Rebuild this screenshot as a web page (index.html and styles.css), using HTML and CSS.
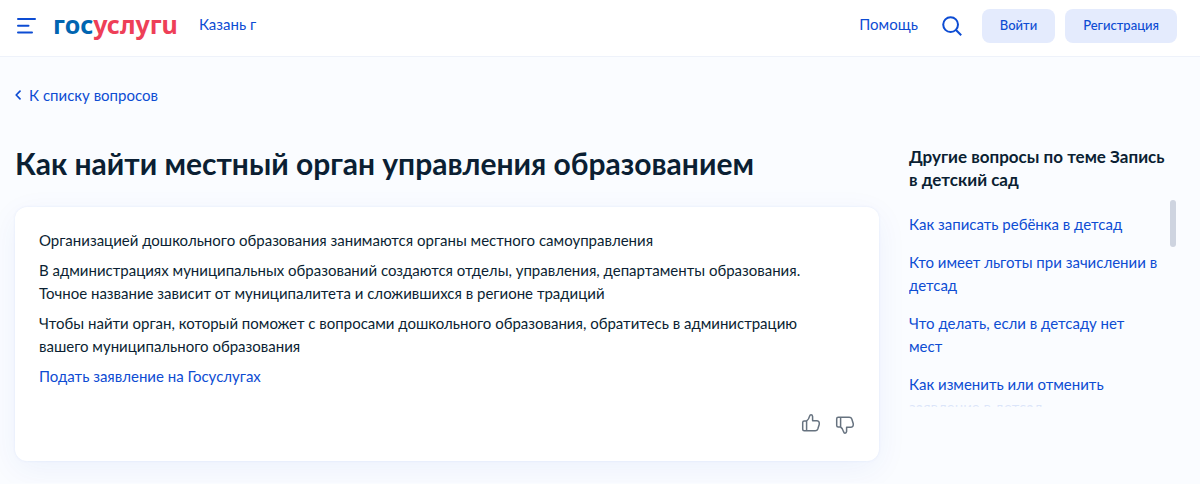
FILE: index.html
```html
<!DOCTYPE html>
<html lang="ru">
<head>
  <meta charset="UTF-8">
  <meta name="viewport" content="width=device-width, initial-scale=1">
  <title>Как найти местный орган управления образованием</title>
  <link rel="stylesheet" href="styles.css">
</head>
<body>
  <header class="header">
    <button class="icon-btn" type="button" aria-label="Меню">
      <svg width="20" height="18" viewBox="0 0 20 18" fill="none" stroke="#0d4cd3" stroke-width="2" stroke-linecap="round">
        <path d="M2 2H19M2 8.7H12.5M2 15.4H16"/>
      </svg>
    </button>
    <a class="logo" href="#" aria-label="Госуслуги"><span class="logo-blue">гос</span><span class="logo-red">услугu</span></a>
    <a class="region" href="#">Казань г</a>
    <nav class="header-right">
      <a class="help" href="#">Помощь</a>
      <button class="icon-btn search" type="button" aria-label="Поиск">
        <svg width="20" height="20" viewBox="0 0 20 20" fill="none" stroke="#0d4cd3" stroke-width="2">
          <circle cx="8.6" cy="8.6" r="7.4"/>
          <path d="M14 14L19.2 19.2"/>
        </svg>
      </button>
      <button class="btn" type="button">Войти</button>
      <button class="btn" type="button">Регистрация</button>
    </nav>
  </header>

  <main class="page">
    <a class="back" href="#">
      <svg width="6" height="10" viewBox="0 0 6 10" fill="none" stroke="#0d4cd3" stroke-width="1.7" stroke-linecap="round" stroke-linejoin="round">
        <path d="M5 1.2L1.2 5L5 8.8"/>
      </svg>
      К списку вопросов
    </a>

    <div class="columns">
      <section class="content">
        <h1 class="title">Как найти местный орган управления образованием</h1>
        <article class="card">
          <div class="card-text">
            <p>Организацией дошкольного образования занимаются органы местного самоуправления</p>
            <p>В администрациях муниципальных образований создаются отделы, управления, департаменты образования. Точное название зависит от муниципалитета и сложившихся в регионе традиций</p>
            <p>Чтобы найти орган, который поможет с вопросами дошкольного образования, обратитесь в администрацию вашего муниципального образования</p>
            <p><a href="#">Подать заявление на Госуслугах</a></p>
          </div>
          <div class="rating">
            <button class="icon-btn" type="button" aria-label="Полезно">
              <svg width="20" height="20" viewBox="0 0 20 20" fill="none" stroke="#66727f" stroke-width="1.5" stroke-linejoin="round">
                <path d="M5.6 8H3.2Q1.7 8 1.7 9.5V16.2Q1.7 17.7 3.2 17.7H14.2Q16.2 17.7 16.8 16L18.2 11.6Q18.8 8 16 7.8H11.6V3.6Q11.4 1.8 10 1.8Q9 1.8 8.6 3.2Q7.8 6.6 5.6 8V17.7"/>
              </svg>
            </button>
            <button class="icon-btn dislike" type="button" aria-label="Не полезно">
              <svg width="20" height="20" viewBox="0 0 20 20" fill="none" stroke="#66727f" stroke-width="1.5" stroke-linejoin="round">
                <path d="M5.6 12H3.2Q1.7 12 1.7 10.5V3.8Q1.7 2.3 3.2 2.3H14.2Q16.2 2.3 16.8 4L18.2 8.4Q18.8 12 16 12.2H11.6V16.4Q11.4 18.2 10 18.2Q9 18.2 8.6 16.8Q7.8 13.4 5.6 12V2.3"/>
              </svg>
            </button>
          </div>
        </article>
      </section>

      <aside class="sidebar">
        <h2 class="sidebar-title">Другие вопросы по теме Запись в детский сад</h2>
        <div class="scroll">
          <ul class="questions">
            <li><a href="#">Как записать ребёнка в детсад</a></li>
            <li><a href="#">Кто имеет льготы при зачислении в детсад</a></li>
            <li><a href="#">Что делать, если в детсаду нет мест</a></li>
            <li><a href="#">Как изменить или отменить заявление в детсад</a></li>
          </ul>
          <span class="thumb"></span>
        </div>
      </aside>
    </div>
  </main>
</body>
</html>
```

FILE: styles.css
```css
* {
  box-sizing: border-box;
}

body {
  margin: 0;
  background: #fafcff;
  color: #0b1f33;
  font-family: Lato, "Open Sans", sans-serif;
  font-size: 15px;
  line-height: 23px;
}

a {
  color: #0d4cd3;
  text-decoration: none;
}

p {
  margin: 0 0 7px;
}

/* Header */
.header {
  display: flex;
  align-items: center;
  height: 57px;
  padding: 0 23px 4px 16px;
  background: #fff;
  border-bottom: 1px solid #eef2fa;
}

.icon-btn {
  display: flex;
  padding: 0;
  border: 0;
  background: none;
  cursor: pointer;
}

.logo {
  margin-left: 17px;
  padding-bottom: 4px;
  font-family: "Noto Sans", sans-serif;
  font-size: 25px;
  font-weight: 700;
}

.logo-blue {
  color: #0065b1;
}

.logo-red {
  color: #ee3f58;
}

.region {
  margin-left: 21px;
  padding-bottom: 4px;
}

.header-right {
  display: flex;
  align-items: center;
  margin-left: auto;
}

.help {
  padding-bottom: 4px;
}

.search {
  margin: 0 20px 0 24px;
}

.btn {
  height: 34px;
  padding: 0 18px 2px;
  border: 0;
  border-radius: 8px;
  background: #e4ebfd;
  color: #0d4cd3;
  font-family: inherit;
  font-size: 13px;
  font-weight: 500;
  cursor: pointer;
}

.btn + .btn {
  margin-left: 10px;
}

/* Page */
.page {
  padding: 26px 23px 22px 15px;
}

.back {
  display: inline-flex;
  align-items: center;
  gap: 8px;
}

.columns {
  display: flex;
  gap: 30px;
  margin-top: 38px;
}

.content {
  flex: 1;
}

.title {
  margin: 0 0 26px;
  font-size: 30px;
  font-weight: 700;
  line-height: 36px;
}

.card {
  padding: 22px 24px 26px;
  border-radius: 12px;
  background: #fff;
  box-shadow: 0 0 3px rgba(13, 76, 211, 0.08), 0 8px 32px rgba(13, 76, 211, 0.06);
}

.card-text {
  padding-right: 24px;
}

.card-text p:last-child {
  margin: 0;
}

.rating {
  display: flex;
  gap: 14px;
  justify-content: flex-end;
  margin-top: 25px;
}

.dislike {
  padding-top: 2px;
}

/* Sidebar */
.sidebar {
  width: 268px;
}

.sidebar-title {
  margin: 0 0 9px;
  font-size: 17px;
  font-weight: 700;
  line-height: 23px;
}

.scroll {
  position: relative;
  height: 207px;
  overflow: hidden;
}

/* fades the last visible line */
.scroll::after {
  content: "";
  position: absolute;
  left: 0;
  right: 0;
  bottom: 0;
  height: 14px;
  background: linear-gradient(rgba(250, 252, 255, 0.6), rgba(250, 252, 255, 0.9));
}

.questions {
  margin: 0;
  padding: 13px 16px 0 0;
  list-style: none;
}

.questions li {
  margin-bottom: 15px;
}

.thumb {
  position: absolute;
  top: 0;
  right: 1px;
  width: 6px;
  height: 47px;
  border-radius: 3px;
  background: #ced4e0;
}
```
